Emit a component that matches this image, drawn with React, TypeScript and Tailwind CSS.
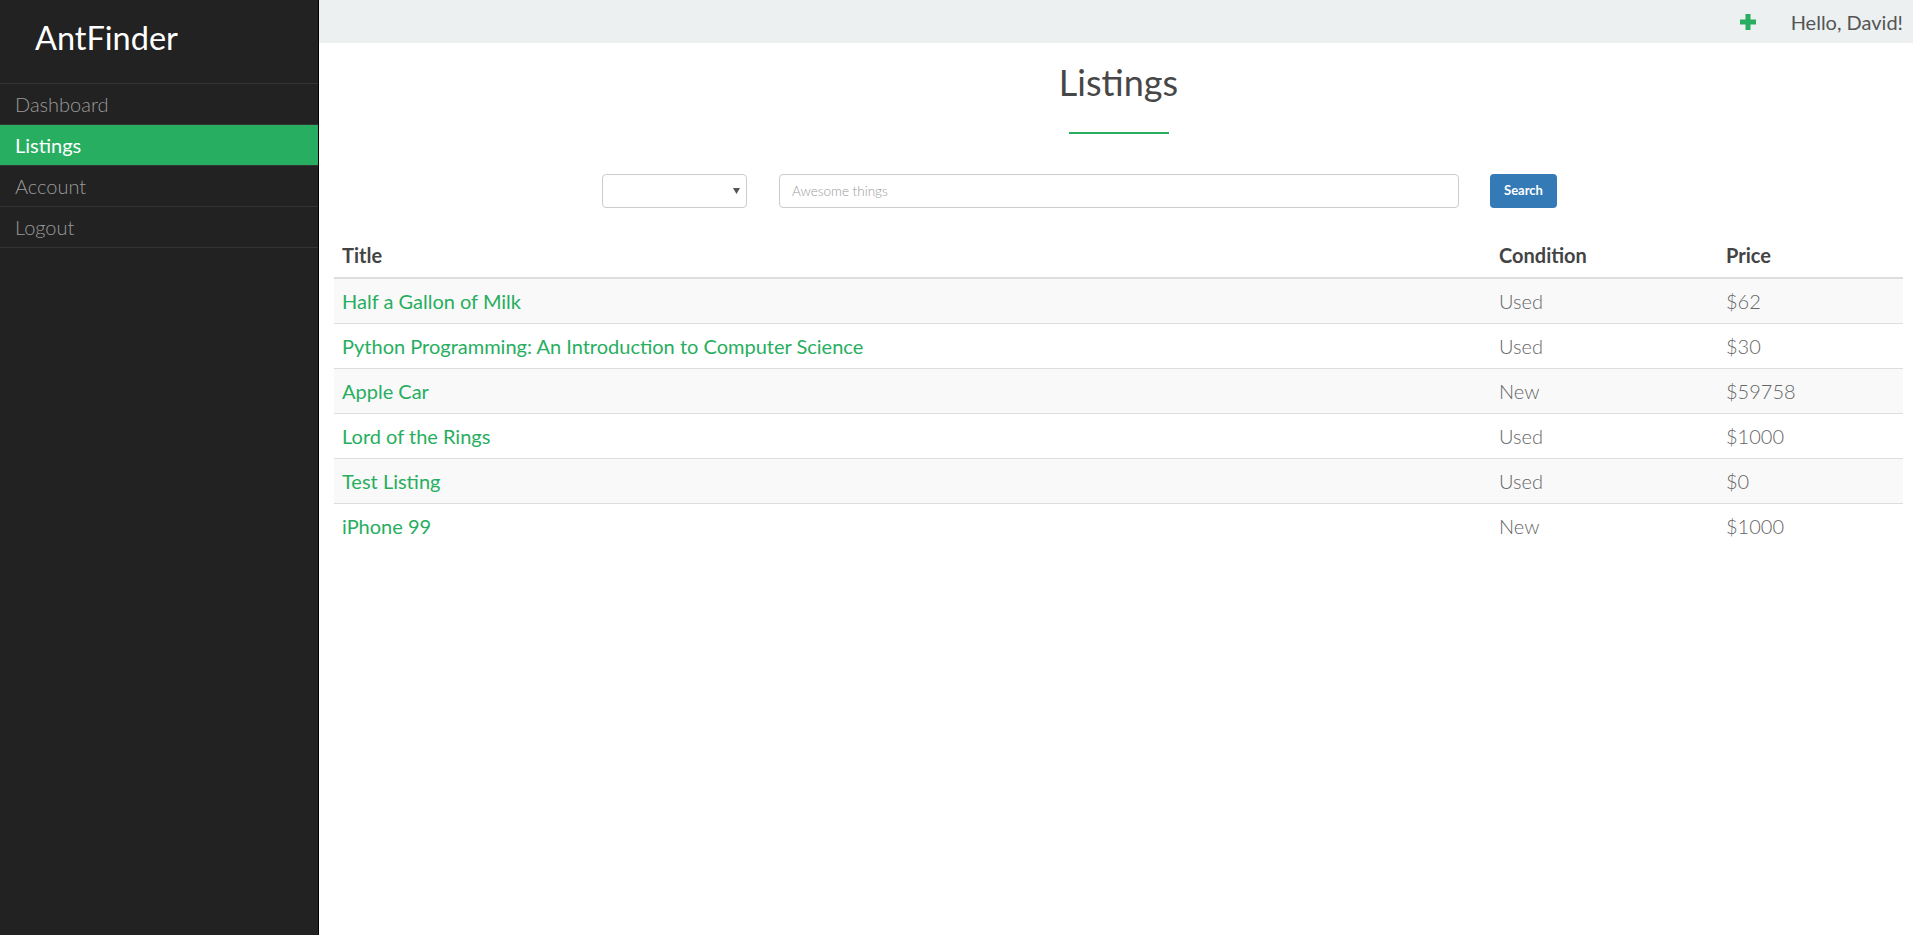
import React from "react";

const rows = [
  { title: "Half a Gallon of Milk", condition: "Used", price: "$62" },
  { title: "Python Programming: An Introduction to Computer Science", condition: "Used", price: "$30" },
  { title: "Apple Car", condition: "New", price: "$59758" },
  { title: "Lord of the Rings", condition: "Used", price: "$1000" },
  { title: "Test Listing", condition: "Used", price: "$0" },
  { title: "iPhone 99", condition: "New", price: "$1000" },
];

const nav = ["Dashboard", "Listings", "Account", "Logout"];

export default function App() {
  return (
    <div className="flex h-screen w-full overflow-hidden bg-white font-[family-name:Lato,sans-serif]">
      <aside className="h-full w-[319px] shrink-0 border-r border-black bg-[#222222]">
        <div className="h-[83px] pl-[35px] pt-[18px] text-[32.5px] leading-[40px] text-white">AntFinder</div>
        <ul>
          {nav.map((n, i) => (
            <li
              key={n}
              className={
                "h-[41px] border-t border-[#333333] pl-[15px] text-[20px] leading-[40px] font-light " +
                (i === 1 ? "bg-[#27ae60] text-white font-normal" : "text-[#9a9a9a]") +
                (i === nav.length - 1 ? " h-[42px] border-b" : "")
              }
            >
              {n}
            </li>
          ))}
        </ul>
      </aside>
      <main className="flex min-w-0 flex-1 flex-col">
        <header className="flex h-[43px] items-center justify-end bg-[#ecf0f1] pr-[10px]">
          <svg width="16" height="16" viewBox="0 0 16 16" className="mr-[35px]">
            <rect x="5.5" y="0" width="5" height="16" fill="#27ae60" />
            <rect x="0" y="5.5" width="16" height="5" fill="#27ae60" />
          </svg>
          <span className="text-[20px] text-[#555555]">Hello, David!</span>
        </header>
        <div className="flex flex-col pl-[15px] pr-[10px]">
          <h1 className="mt-[19px] text-center text-[36px] leading-[40px] text-[#474747]">Listings</h1>
          <div className="mx-auto mt-[30px] h-[2px] w-[100px] bg-[#27ae60]" />
          <div className="mt-[40px] flex h-[34px] items-stretch pl-[268px]">
            <div className="relative w-[145px] rounded-[4px] border border-[#cccccc] bg-white">
              <svg width="7" height="6" viewBox="0 0 7 6" className="absolute right-[6px] top-[13px]">
                <path d="M0 0 L7 0 L3.5 6 Z" fill="#555555" />
              </svg>
            </div>
            <div className="ml-[32px] flex w-[680px] items-center rounded-[4px] border border-[#cccccc] bg-white pl-[12px] text-[13.5px] font-light text-[#999999]">
              Awesome things
            </div>
            <button className="ml-[31px] w-[67px] rounded-[4px] bg-[#337ab7] text-[13px] font-bold text-white">
              Search
            </button>
          </div>
          <div className="mt-[25px]">
            <div className="grid grid-cols-[1157px_227px_1fr] border-b-2 border-[#dddddd] text-[20px] font-bold leading-[28px] text-[#444444]">
              <div className="p-[8px]">Title</div>
              <div className="p-[8px]">Condition</div>
              <div className="p-[8px]">Price</div>
            </div>
            {rows.map((r, i) => (
              <div
                key={i}
                className={
                  "grid grid-cols-[1157px_227px_1fr] text-[20px] leading-[28px] " +
                  (i > 0 ? "border-t border-[#dddddd] " : "") +
                  (i % 2 === 0 ? "bg-[#f9f9f9]" : "bg-white")
                }
              >
                <div className="p-[8px] text-[#27ae60]">{r.title}</div>
                <div className="p-[8px] font-light text-[#666666]">{r.condition}</div>
                <div className="p-[8px] font-light text-[#666666]">{r.price}</div>
              </div>
            ))}
          </div>
        </div>
      </main>
    </div>
  );
}
